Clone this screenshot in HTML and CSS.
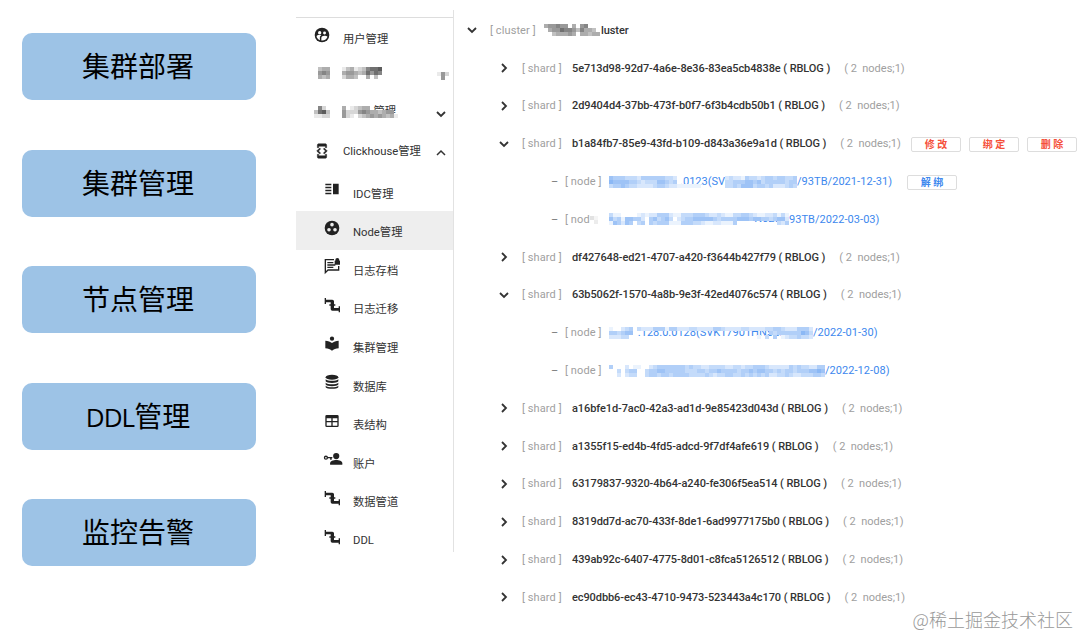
FILE: index.html
```html
<!DOCTYPE html>
<html lang="zh-CN">
<head>
    <meta charset="UTF-8">
    <title>Clickhouse管理</title>
    <link rel="stylesheet" href="styles.css">
</head>
<body>
<svg class="defs">
    <symbol id="down" viewBox="0 0 10 10"><path d="M1 3l4 4 4-4" fill="none" stroke="currentColor" stroke-width="1.8"/></symbol>
    <symbol id="right" viewBox="0 0 10 10"><path d="M3 1l4 4-4 4" fill="none" stroke="currentColor" stroke-width="1.8"/></symbol>
    <symbol id="up" viewBox="0 0 10 10"><path d="M1 7l4-4 4 4" fill="none" stroke="currentColor" stroke-width="1.5"/></symbol>
    <symbol id="pipe" viewBox="0 0 24 24"><path d="M24 14h-2v2.500h-7V13h2v-2h-2V6.500a2.500 2.500 0 0 0-2.500-2.500H3V1.500H1v9h2V8h7v3H8v2h2v5a2.500 2.500 0 0 0 2.500 2.500H22V23h2z"/></symbol>
</svg>
<div class="page">
    <ul class="features">
        <li>集群部署</li>
        <li>集群管理</li>
        <li>节点管理</li>
        <li><span class="latin">DDL</span>管理</li>
        <li>监控告警</li>
    </ul>
    <div class="side">
        <ul class="menu">
            <li>
                <svg class="icon" viewBox="0 0 24 24"><circle cx="12" cy="12" r="11"/><g fill="#fff"><circle cx="8.5" cy="8.5" r="2.5"/><circle cx="15.8" cy="9" r="2.2"/><path d="M3.8 13.5c2-2 5-2.300 7-1.200-1.400.8-2 2-2 3.500v4C6 18.800 4.200 16.500 3.800 13.500zM11 20.200V16c0-2 2-3 4.500-3 2 0 3.700.5 4.700 1.500-1 3.500-4.500 6.200-9.200 5.700z"/></g></svg>
                <span>用户管理</span>
            </li>
            <li class="hidden-item">
                <i class="mask first" data-cells=".344|.565|.434"></i>
                <i class="mask long" data-cells="1341236778.|4554347576.|2443..4.3.."></i>
                <i class="mask arrow" data-cells="152|.5."></i>
            </li>
            <li class="hidden-item">
                <i class="mask first" data-cells=".62.|3783|1122"></i>
                <i class="mask long" data-cells="4.12344.......|5222565443455.|521.2345454341"><b>管理</b></i>
                <svg class="fold"><use href="#down"/></svg>
            </li>
            <li class="parent">
                <svg class="icon" viewBox="0 0 24 24"><path d="M7 5h10v2h2V3c0-1.100-.9-2-2-2H7c-1.100 0-2 .9-2 2v4h2V5zm8.410 11.590L20 12l-4.590-4.590L14 8.830 17.170 12 14 15.170l1.410 1.420zM10 15.170L6.830 12 10 8.830 8.590 7.410 4 12l4.590 4.590L10 15.170zM17 19H7v-2H5v4c0 1.100.9 2 2 2h10c1.100 0 2-.9 2-2v-4h-2v2z" stroke="#222" stroke-width=".6"/></svg>
                <span>Clickhouse管理</span>
                <svg class="fold"><use href="#up"/></svg>
            </li>
        </ul>
        <ul class="menu sub">
            <li>
                <svg class="icon" viewBox="0 0 24 24"><path d="M2 4h9v2.200H2zM2 8.500h9v2.200H2zM2 13h9v2.200H2zM2 17.500h9v2.200H2zM13.500 4H22v15.700h-8.500z"/></svg>
                <span>IDC管理</span>
            </li>
            <li class="active">
                <svg class="icon" viewBox="0 0 24 24"><circle cx="12" cy="12" r="11"/><g fill="#eee"><circle cx="12" cy="7" r="2.700"/><circle cx="7.500" cy="14.700" r="2.700"/><circle cx="16.500" cy="14.700" r="2.700"/></g></svg>
                <span>Node管理</span>
            </li>
            <li>
                <svg class="icon" viewBox="0 0 24 24"><path d="M15 2.500H2V22l4-4h16v-6" fill="none" stroke="#222" stroke-width="2"/><path d="M5 6h9v2H5zM5 9.500h12v2H5zM5 13h9v2H5zM17 4V3a3 3 0 0 1 6 0v1h1v6h-8V4z"/></svg>
                <span>日志存档</span>
            </li>
            <li>
                <svg class="icon"><use href="#pipe"/></svg>
                <span>日志迁移</span>
            </li>
            <li>
                <svg class="icon" viewBox="0 0 24 24"><path d="M12 10.500C9.600 8.500 6 7 2 7v11.500c4 0 7.600 1.500 10 3.500 2.400-2 6-3.500 10-3.500V7c-4 0-7.600 1.500-10 3.500z"/><circle cx="12" cy="4" r="3.200"/></svg>
                <span>集群管理</span>
            </li>
            <li>
                <svg class="icon" viewBox="0 0 24 24"><ellipse cx="12" cy="5" rx="9.500" ry="3.700"/><path d="M2.500 8c3 3 16 3 19 0v3c-2 3.400-17 3.400-19 0zM2.500 13c3 3 16 3 19 0v2.800c-2 3.400-17 3.400-19 0zM2.500 17.700c3 3 16 3 19 0v2c-2 3.400-17 3.400-19 0z"/></svg>
                <span>数据库</span>
            </li>
            <li>
                <svg class="icon" viewBox="0 0 24 24"><path d="M4 3h16a2 2 0 0 1 2 2v14a2 2 0 0 1-2 2H4a2 2 0 0 1-2-2V5a2 2 0 0 1 2-2zm0 5v4h7V8zm9 0v4h7V8zm-9 6v5h7v-5zm9 0v5h7v-5z"/></svg>
                <span>表结构</span>
            </li>
            <li>
                <svg class="icon wide" viewBox="0 0 28 24"><circle cx="19" cy="7.500" r="4.800"/><path d="M9.500 21v-2.500c0-3.500 5-5 9.500-5s9.500 1.500 9.500 5V21z"/><circle cx="3" cy="10" r="2.300" fill="none" stroke="#222" stroke-width="2"/><path d="M5 9h8v2h-1v2H9.500v-2H5z"/></svg>
                <span>账户</span>
            </li>
            <li>
                <svg class="icon"><use href="#pipe"/></svg>
                <span>数据管道</span>
            </li>
            <li>
                <svg class="icon"><use href="#pipe"/></svg>
                <span>DDL</span>
            </li>
        </ul>
    </div>
    <ul class="tree">
        <li class="cluster">
            <svg class="switch"><use href="#down"/></svg>
            <span class="tag">[ cluster ]</span>
            <i class="mask" data-cells="455655.4.56...|.455766536443.|..344454.44344"></i><span class="name">luster</span>
        </li>
        <li class="shard"><svg class="switch"><use href="#right"/></svg><span class="tag">[ shard ]</span><span class="name">5e713d98-92d7-4a6e-8e36-83ea5cb4838e ( RBLOG )</span><span class="count">( 2&nbsp; nodes;1)</span></li>
        <li class="shard"><svg class="switch"><use href="#right"/></svg><span class="tag">[ shard ]</span><span class="name">2d9404d4-37bb-473f-b0f7-6f3b4cdb50b1 ( RBLOG )</span><span class="count">( 2&nbsp; nodes;1)</span></li>
        <li class="shard">
            <svg class="switch"><use href="#down"/></svg><span class="tag">[ shard ]</span><span class="name">b1a84fb7-85e9-43fd-b109-d843a36e9a1d ( RBLOG )</span><span class="count">( 2&nbsp; nodes;1)</span>
            <div class="btns">
                <button class="red">修 改</button>
                <button class="red">绑 定</button>
                <button class="red">删 除</button>
            </div>
        </li>
        <li class="node">
            <span class="dash">–</span><span class="tag">[ node ]</span>
            <i class="mask" data-cells="54443332444444332............|65555443233355434............|34454332222344322111111......"><b>.0123(SV</b></i><i class="mask" data-cells="232214332344344334|334445545344444344|334355534434222343"></i><span class="link">/93TB/2021-12-31)</span>
            <div class="btns"><button>解 绑</button></div>
        </li>
        <li class="node">
            <span class="dash">–</span><span class="tag">[ nod<i class="mask" data-cells="31|.2"></i></span>
            <i class="mask" data-cells="311000012122444211333444322321133443211223131|534155442045345302344555554344445554554434552|15425403404344411144433211221114..........324"><b>N5286,</b></i><span class="link">93TB/2022-03-03)</span>
        </li>
        <li class="shard"><svg class="switch"><use href="#right"/></svg><span class="tag">[ shard ]</span><span class="name">df427648-ed21-4707-a420-f3644b427f79 ( RBLOG )</span><span class="count">( 2&nbsp; nodes;1)</span></li>
        <li class="shard"><svg class="switch"><use href="#down"/></svg><span class="tag">[ shard ]</span><span class="name">63b5062f-1570-4a8b-9e3f-42ed4076c574 ( RBLOG )</span><span class="count">( 2&nbsp; nodes;1)</span></li>
        <li class="node">
            <span class="dash">–</span><span class="tag">[ node ]</span>
            <i class="mask" data-cells="100234032224441442223322224432222332222334432224442|443455..................................43444444653|22233................................1.3.4.12334332"><b>.128.0.0128(SVK17901HN5286H&nbsp; &nbsp; &nbsp;</b></i><span class="link">/2022-01-30)</span>
        </li>
        <li class="node">
            <span class="dash">–</span><span class="tag">[ node ]</span>
            <i class="mask" data-cells="400020110023444444434332233332233233444322222434332244|003034400344554444433344344544443445455443434434445565|002023300344344344443333432334433434343422334322333443"></i><span class="link">/2022-12-08)</span>
        </li>
        <li class="shard"><svg class="switch"><use href="#right"/></svg><span class="tag">[ shard ]</span><span class="name">a16bfe1d-7ac0-42a3-ad1d-9e85423d043d ( RBLOG )</span><span class="count">( 2&nbsp; nodes;1)</span></li>
        <li class="shard"><svg class="switch"><use href="#right"/></svg><span class="tag">[ shard ]</span><span class="name">a1355f15-ed4b-4fd5-adcd-9f7df4afe619 ( RBLOG )</span><span class="count">( 2&nbsp; nodes;1)</span></li>
        <li class="shard"><svg class="switch"><use href="#right"/></svg><span class="tag">[ shard ]</span><span class="name">63179837-9320-4b64-a240-fe306f5ea514 ( RBLOG )</span><span class="count">( 2&nbsp; nodes;1)</span></li>
        <li class="shard"><svg class="switch"><use href="#right"/></svg><span class="tag">[ shard ]</span><span class="name">8319dd7d-ac70-433f-8de1-6ad9977175b0 ( RBLOG )</span><span class="count">( 2&nbsp; nodes;1)</span></li>
        <li class="shard"><svg class="switch"><use href="#right"/></svg><span class="tag">[ shard ]</span><span class="name">439ab92c-6407-4775-8d01-c8fca5126512 ( RBLOG )</span><span class="count">( 2&nbsp; nodes;1)</span></li>
        <li class="shard"><svg class="switch"><use href="#right"/></svg><span class="tag">[ shard ]</span><span class="name">ec90dbb6-ec43-4710-9473-523443a4c170 ( RBLOG )</span><span class="count">( 2&nbsp; nodes;1)</span></li>
    </ul>
</div>
<div class="watermark">@稀土掘金技术社区</div>
<script src="mask.js"></script>
</body>
</html>
```
FILE: mask.js
```js
// each digit is one mosaic cell, a dot leaves the text visible
var aMask = document.querySelectorAll(".mask");
var size = 4;

for(var i=0;i<aMask.length;i++){
    var rows = aMask[i].getAttribute("data-cells").split("|");
    var w = rows[0].length*size;
    var h = rows.length*size;
    var html = "";
    for(var y=0;y<rows.length;y++){
        for(var x=0;x<rows[y].length;x++){
            var n = rows[y].charAt(x);
            if(n != "."){
                var pos = 'x="'+x*size+'" y="'+y*size+'" width="4" height="4"';
                html += '<rect '+pos+' fill="#fff"/><rect '+pos+' fill="currentColor" fill-opacity="'+n/10+'"/>';
            }
        }
    }
    aMask[i].style.width = w+"px";
    aMask[i].style.height = h+"px";
    aMask[i].insertAdjacentHTML("beforeend",'<svg width="'+w+'" height="'+h+'" shape-rendering="crispEdges">'+html+'</svg>');
}
```
FILE: styles.css
```css
*{
    padding: 0;
    margin: 0;
    box-sizing: border-box;
}
ul{
    list-style-type: none;
}
body{
    width: 1080px;
    height: 636px;
    overflow: hidden;
    background-color: #ffffff;
    font-family: Roboto, "Noto Sans CJK SC", sans-serif;
    font-size: 11px;
    color: #333333;
}
.defs{
    display: none;
}
.page{
    display: flex;
    align-items: flex-start;
}
.features{
    width: 296px;
    flex-shrink: 0;
    padding: 33px 40px 0 22px;
    display: flex;
    flex-direction: column;
    gap: 49.6px;
}
.features li{
    height: 67px;
    padding-right: 2px;
    border-radius: 10px;
    background-color: #9dc3e6;
    color: #000000;
    font-family: "Noto Sans CJK SC", sans-serif;
    font-size: 28px;
    line-height: 65px;
    text-align: center;
}
.latin{
    font-family: "Open Sans", sans-serif;
    font-size: 26px;
    letter-spacing: -1px;
}
.side{
    width: 158px;
    flex-shrink: 0;
    height: 542px;
    margin-top: 10px;
    padding-top: 7px;
    border-right: 1px solid #e2e2e2;
}
.menu{
    border-top: 1px solid #dddddd;
    font-size: 11.3px;
}
.menu li{
    height: 38.6px;
    padding-left: 18px;
    display: flex;
    align-items: center;
}
.menu span{
    margin: 2px 0 0 13px;
    white-space: nowrap;
}
.icon{
    width: 16px;
    height: 16px;
    margin-top: -5px;
    fill: #222222;
    flex-shrink: 0;
    overflow: visible;
}
.wide{
    width: 18px;
    margin-right: -2px;
}
.fold{
    width: 10px;
    height: 10px;
    margin: 0 7px 0 auto;
}
.menu .parent span{
    margin-top: -6px;
}
.sub{
    border-top: none;
    padding-top: 0;
}
.sub li{
    padding-left: 28px;
}
.menu .active{
    background-color: #eeeeee;
}
.tree{
    padding: 11.5px 0 0 13px;
}
.tree li{
    height: 37.8px;
    display: flex;
    align-items: center;
    white-space: nowrap;
}
.tree .shard{
    padding-left: 32px;
}
.tree .node{
    padding-left: 84px;
}
.switch{
    width: 10px;
    height: 10px;
    margin-right: 13px;
}
.tag, .count{
    color: #a0a0a0;
}
.tag{
    width: 40px;
    margin-right: 10px;
    letter-spacing: 0.1px;
}
.cluster .tag{
    width: 46px;
    margin-right: 8px;
}
.cluster .name{
    margin-left: 1px;
}
.name{
    font-weight: 500;
    letter-spacing: -0.09px;
}
.count{
    margin-left: 14px;
}
.dash{
    width: 14px;
    color: #777777;
}
.node{
    color: #3d88ee;
}
.node .tag{
    width: 37px;
    margin-right: 7px;
}
.link{
    letter-spacing: 0.05px;
}
.mask{
    display: inline-block;
    position: relative;
    flex-shrink: 0;
    font-style: normal;
}
.mask svg{
    position: absolute;
    left: 0;
    top: 0;
}
.mask b{
    position: absolute;
    right: 0;
    top: 0;
    line-height: 12px;
    font-weight: normal;
}
.tag .mask{
    vertical-align: -1px;
}
.hidden-item .mask{
    margin-top: -5px;
}
.hidden-item .first{
    width: 16px;
}
.hidden-item .long{
    margin-left: 12px;
}
.hidden-item .long b{
    right: 2px;
}
.hidden-item .arrow{
    margin: 0 4px 0 auto;
}
.btns{
    display: flex;
    gap: 8px;
    margin-left: 10px;
}
.node .btns{
    margin-left: 15px;
}
.btns button{
    width: 50px;
    height: 15px;
    margin-top: 1px;
    border: 1px solid #dddddd;
    border-radius: 2px;
    background-color: #ffffff;
    color: #3d88ee;
    font-family: Roboto, "Noto Sans CJK SC", sans-serif;
    font-size: 10px;
    font-weight: bold;
    line-height: 13px;
}
.btns .red{
    color: #f5503a;
}
.watermark{
    position: absolute;
    right: 7px;
    top: 606px;
    font-family: "Noto Sans CJK SC", sans-serif;
    font-weight: 300;
    font-size: 18px;
    line-height: 26px;
    color: #999999;
}
```
